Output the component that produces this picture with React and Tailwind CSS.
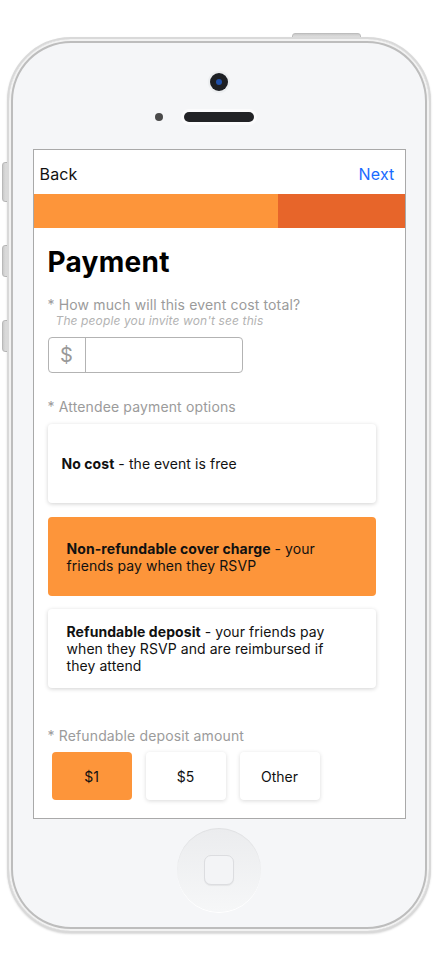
import React from 'react'

const options = [
  { bold: 'No cost', rest: ' - the event is free', pad: 'pl-[14px]', gap: 'mt-0' },
  { bold: 'Non-refundable cover charge', rest: ' - your friends pay when they RSVP', pad: 'pl-[19px]', gap: 'mt-[14px]', active: true },
  { bold: 'Refundable deposit', rest: ' - your friends pay when they RSVP and are reimbursed if they attend', pad: 'pl-[19px]', gap: 'mt-[13px]' },
]

const amounts = ['$1', '$5', 'Other']

const App = () => {
  return (
    <div className="w-[436px] h-[970px] bg-white overflow-hidden" style={{ fontFamily: 'Inter, "Noto Sans", sans-serif' }}>
      <div className="relative ml-[7px] mt-[37px] w-[424px] h-[896px]">
        {/* side buttons */}
        <div className="absolute -left-[5px] top-[125px] w-[6px] h-[40px] rounded-l-[3px] bg-gradient-to-r from-[#c9c9c9] to-[#e6e6e6] border border-[#b9b9b9]" />
        <div className="absolute -left-[5px] top-[208px] w-[6px] h-[32px] rounded-l-[3px] bg-gradient-to-r from-[#c9c9c9] to-[#e6e6e6] border border-[#b9b9b9]" />
        <div className="absolute -left-[5px] top-[283px] w-[6px] h-[32px] rounded-l-[3px] bg-gradient-to-r from-[#c9c9c9] to-[#e6e6e6] border border-[#b9b9b9]" />
        <div className="absolute left-[285px] -top-[4px] w-[69px] h-[6px] rounded-t-[3px] bg-gradient-to-b from-[#c9c9c9] to-[#e8e8e8] border border-[#bdbdbd]" />

        {/* phone body */}
        <div className="relative flex flex-col items-center w-full h-full rounded-[64px] bg-[#f5f6f8] border-[2px] border-[#d9d9d9] shadow-[inset_0_0_0_2px_#f2f2f2,inset_0_0_0_4px_#bdbdbd,0_1px_2px_rgba(0,0,0,0.15)]">
          {/* camera */}
          <div className="mt-[34px] w-[18px] h-[18px] rounded-full bg-[#1d1f24] flex items-center justify-center shadow-[0_0_0_2px_#eceef0]">
            <div className="w-[6px] h-[6px] rounded-full bg-[#1f4fa8]" />
          </div>
          {/* speaker row */}
          <div className="mt-[21px] flex items-center gap-[21px]">
            <div className="w-[8px] h-[8px] rounded-full bg-[#4a4a4a]" />
            <div className="w-[70px] h-[10px] rounded-full bg-[#222326] shadow-[0_0_0_3px_#fbfbfc]" />
            <div className="w-[8px] h-[8px]" />
          </div>

          {/* screen */}
          <div className="mt-[27px] w-[373px] h-[670px] bg-white border border-[#a9a9a9] flex flex-col text-[#111]">
            <div className="h-[44px] flex justify-between px-[6px] pt-[14px] text-[16px] leading-[20px] tracking-[0.01em]">
              <span>Back</span>
              <span className="text-[#1a6bff] pr-[4px]">Next</span>
            </div>
            <div className="flex h-[34px]">
              <div className="w-[244px] bg-[#fd953a]" />
              <div className="flex-1 bg-[#e7652a]" />
            </div>

            <div className="pl-[14px] pt-[18px] flex flex-col">
              <h1 className="text-[28px] leading-[32px] font-bold text-black tracking-[0.01em]">Payment</h1>
              <p className="mt-[17px] text-[14px] leading-[20px] text-[#9b9b9b] tracking-[0.01em]">* How much will this event cost total?</p>
              <p className="-mt-[1px] pl-[8px] text-[12px] leading-[14px] italic text-[#b3b3b3] tracking-[0.01em]">The people you invite won't see this</p>

              <div className="mt-[9px] flex w-[195px] h-[36px] rounded-[4px] border border-[#b3b3b3]">
                <div className="w-[37px] border-r border-[#b3b3b3] flex items-center justify-center text-[20px] text-[#999]">$</div>
                <div className="flex-1" />
              </div>

              <p className="mt-[24px] text-[14px] leading-[20px] text-[#9b9b9b] tracking-[0.01em]">* Attendee payment options</p>

              <div className="mt-[7px] flex flex-col">
                {options.map((opt, i) => (
                  <div
                    key={i}
                    className={`${opt.gap} w-[328px] h-[79px] rounded-[4px] flex items-center ${opt.pad} ${
                      opt.active ? 'bg-[#fd953a]' : 'bg-white shadow-[0_1px_4px_rgba(0,0,0,0.18)]'
                    }`}
                  >
                    <p className="w-[272px] text-[14px] leading-[17px] text-[#111] tracking-[0.005em]">
                      <b>{opt.bold}</b>{opt.rest}
                    </p>
                  </div>
                ))}
              </div>

              <p className="mt-[38px] text-[14px] leading-[20px] text-[#9b9b9b] tracking-[0.01em]">* Refundable deposit amount</p>

              <div className="mt-[6px] ml-[4px] flex gap-[14px]">
                {amounts.map((a, i) => (
                  <div
                    key={a}
                    className={`w-[80px] h-[48px] rounded-[4px] flex items-center justify-center text-[14px] text-[#111] ${
                      i === 0 ? 'bg-[#fd953a]' : 'bg-white shadow-[0_1px_4px_rgba(0,0,0,0.15)]'
                    }`}
                  >
                    {a}
                  </div>
                ))}
              </div>
            </div>
          </div>

          {/* home button */}
          <div className="mt-[9px] w-[84px] h-[84px] rounded-full bg-gradient-to-b from-[#ebecee] to-[#f6f7f8] shadow-[0_1px_0_#ffffff,inset_0_1px_1px_rgba(0,0,0,0.05)] flex items-center justify-center">
            <div className="w-[30px] h-[30px] rounded-[7px] border border-[#dcdde0] bg-[#f3f4f6] shadow-[0_1px_1px_rgba(0,0,0,0.06)]" />
          </div>
        </div>
      </div>
    </div>
  )
}

export default App
